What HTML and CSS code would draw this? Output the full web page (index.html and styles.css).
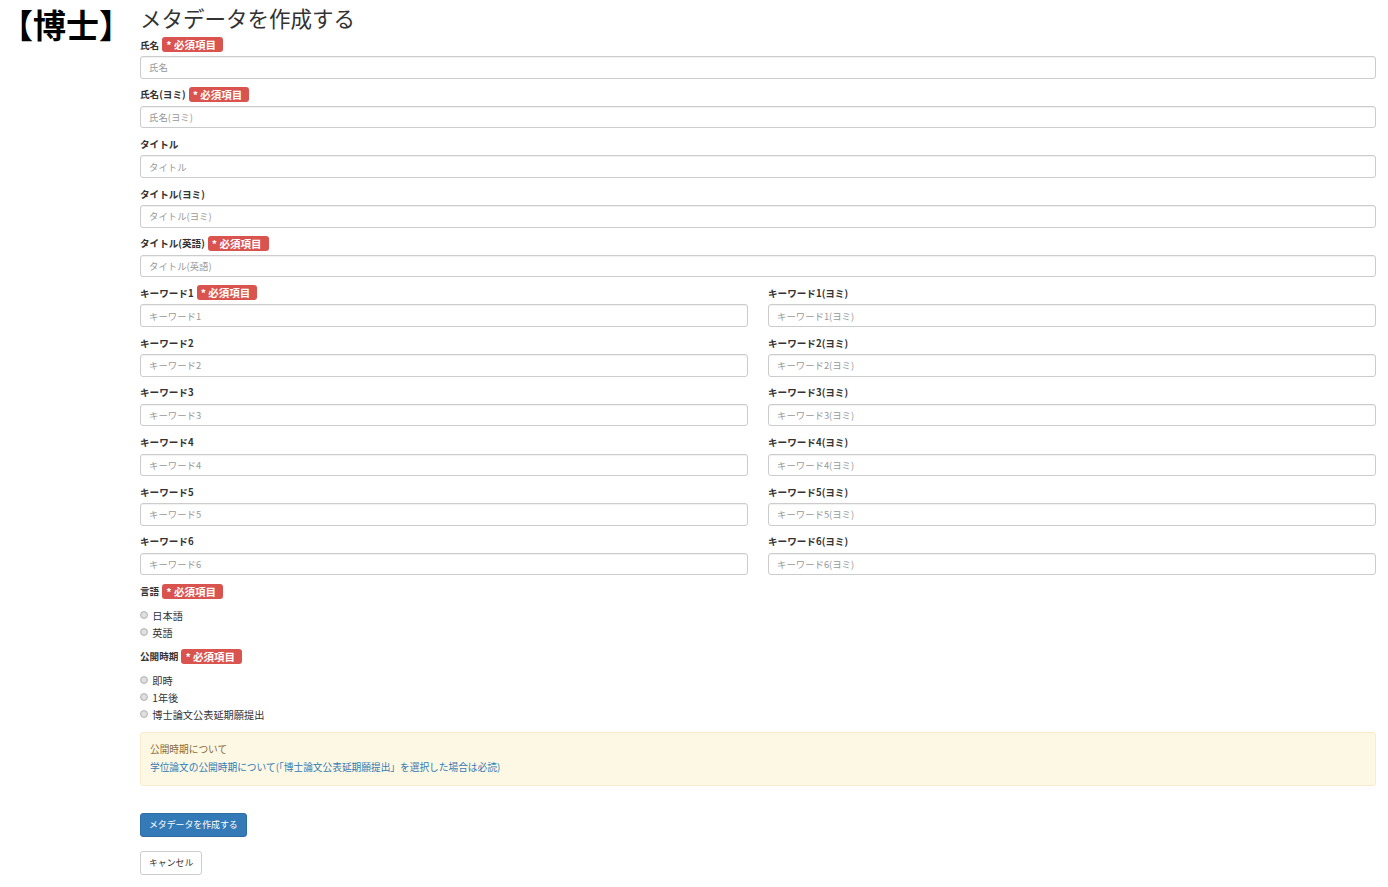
FILE: index.html
```html
<!DOCTYPE html>
<html lang="ja">
<head>
<meta charset="utf-8">
<title>メタデータを作成する</title>
<link rel="stylesheet" href="styles.css">
</head>
<body>
<div class="page">
  <aside class="side">
    <div class="degree">【博士】</div>
  </aside>
  <main class="main">
    <h1 class="title">メタデータを作成する</h1>
    <form class="form">
      <div class="group">
        <label class="lbl">氏名 <span class="req">* 必須項目</span></label>
        <input class="ctl" type="text" placeholder="氏名">
      </div>
      <div class="group">
        <label class="lbl">氏名(ヨミ) <span class="req">* 必須項目</span></label>
        <input class="ctl" type="text" placeholder="氏名(ヨミ)">
      </div>
      <div class="group">
        <label class="lbl">タイトル</label>
        <input class="ctl" type="text" placeholder="タイトル">
      </div>
      <div class="group">
        <label class="lbl">タイトル(ヨミ)</label>
        <input class="ctl" type="text" placeholder="タイトル(ヨミ)">
      </div>
      <div class="group">
        <label class="lbl">タイトル(英語) <span class="req">* 必須項目</span></label>
        <input class="ctl" type="text" placeholder="タイトル(英語)">
      </div>

      <div class="pair">
        <div class="group">
          <label class="lbl">キーワード1 <span class="req">* 必須項目</span></label>
          <input class="ctl" type="text" placeholder="キーワード1">
        </div>
        <div class="group">
          <label class="lbl">キーワード1(ヨミ)</label>
          <input class="ctl" type="text" placeholder="キーワード1(ヨミ)">
        </div>
      </div>
      <div class="pair">
        <div class="group">
          <label class="lbl">キーワード2</label>
          <input class="ctl" type="text" placeholder="キーワード2">
        </div>
        <div class="group">
          <label class="lbl">キーワード2(ヨミ)</label>
          <input class="ctl" type="text" placeholder="キーワード2(ヨミ)">
        </div>
      </div>
      <div class="pair">
        <div class="group">
          <label class="lbl">キーワード3</label>
          <input class="ctl" type="text" placeholder="キーワード3">
        </div>
        <div class="group">
          <label class="lbl">キーワード3(ヨミ)</label>
          <input class="ctl" type="text" placeholder="キーワード3(ヨミ)">
        </div>
      </div>
      <div class="pair">
        <div class="group">
          <label class="lbl">キーワード4</label>
          <input class="ctl" type="text" placeholder="キーワード4">
        </div>
        <div class="group">
          <label class="lbl">キーワード4(ヨミ)</label>
          <input class="ctl" type="text" placeholder="キーワード4(ヨミ)">
        </div>
      </div>
      <div class="pair">
        <div class="group">
          <label class="lbl">キーワード5</label>
          <input class="ctl" type="text" placeholder="キーワード5">
        </div>
        <div class="group">
          <label class="lbl">キーワード5(ヨミ)</label>
          <input class="ctl" type="text" placeholder="キーワード5(ヨミ)">
        </div>
      </div>
      <div class="pair">
        <div class="group">
          <label class="lbl">キーワード6</label>
          <input class="ctl" type="text" placeholder="キーワード6">
        </div>
        <div class="group">
          <label class="lbl">キーワード6(ヨミ)</label>
          <input class="ctl" type="text" placeholder="キーワード6(ヨミ)">
        </div>
      </div>

      <div class="rgroup">
        <label class="lbl">言語 <span class="req">* 必須項目</span></label>
        <div class="radios">
          <label class="radio"><input type="radio" name="lang"> 日本語</label>
          <label class="radio"><input type="radio" name="lang"> 英語</label>
        </div>
      </div>
      <div class="rgroup">
        <label class="lbl">公開時期 <span class="req">* 必須項目</span></label>
        <div class="radios">
          <label class="radio"><input type="radio" name="pub"> 即時</label>
          <label class="radio"><input type="radio" name="pub"> 1年後</label>
          <label class="radio"><input type="radio" name="pub"> 博士論文公表延期願提出</label>
        </div>
      </div>

      <div class="alert">
        <div class="alert-title">公開時期について</div>
        <a class="alert-link" href="#">学位論文の公開時期について(「博士論文公表延期願提出」を選択した場合は必読)</a>
      </div>

      <div class="actions">
        <button type="button" class="btn btn-primary">メタデータを作成する</button>
        <button type="button" class="btn btn-default">キャンセル</button>
      </div>
    </form>
  </main>
</div>
</body>
</html>
```

FILE: styles.css
```css
* { box-sizing: border-box; }

html, body {
  margin: 0;
  padding: 0;
  background: #fff;
}

body {
  font-family: "Noto Sans CJK JP", "Noto Sans", sans-serif;
  color: #333;
  font-size: 9.4px;
  overflow: hidden;
}

.page {
  display: flex;
  align-items: flex-start;
}

.side {
  width: 140px;
  flex: 0 0 140px;
}

.degree {
  font-size: 33px;
  font-weight: 700;
  line-height: 48px;
  color: #000;
  margin: 0;
  white-space: nowrap;
}

.main {
  flex: 1;
  padding-right: 12px;
}

.title {
  margin: 4px 0 5px;
  font-size: 21.5px;
  line-height: 28px;
  font-weight: 400;
  color: #333;
}

.form {
  display: flex;
  flex-direction: column;
}

.group {
  display: flex;
  flex-direction: column;
  margin-bottom: 8.2px;
}

.pair {
  display: grid;
  grid-template-columns: 1fr 1fr;
  column-gap: 20px;
}

.lbl {
  display: flex;
  align-items: center;
  gap: 3px;
  height: 15px;
  margin-bottom: 4px;
  font-size: 9.6px;
  font-weight: 700;
  color: #333;
  white-space: nowrap;
}

.req {
  display: inline-flex;
  align-items: center;
  height: 15px;
  padding: 0 7px 0 4px;
  background: #d9534f;
  color: #fff;
  border-radius: 3px;
  font-size: 10.5px;
  font-weight: 700;
}

.ctl {
  display: block;
  width: 100%;
  height: 22.5px;
  padding: 0 8px;
  border: 1px solid #ccc;
  border-radius: 3px;
  font-family: inherit;
  font-size: 9.4px;
  color: #555;
  background: #fff;
  box-shadow: inset 0 1px 1px rgba(0,0,0,0.06);
  outline: none;
}

.ctl::placeholder {
  color: #999;
}

.rgroup {
  display: flex;
  flex-direction: column;
  margin-bottom: 8px;
}

.rgroup .lbl {
  margin-bottom: 8px;
}

.radios {
  display: flex;
  flex-direction: column;
}

.radio {
  display: flex;
  align-items: center;
  height: 17px;
  font-size: 10.2px;
  color: #333;
  white-space: pre;
}

.radio input {
  appearance: none;
  -webkit-appearance: none;
  width: 8px;
  height: 8px;
  margin: 0 2px 0 0;
  border: 1px solid #b5b5b5;
  border-radius: 50%;
  background: radial-gradient(circle at 50% 50%, #e6e6e6 0%, #d0d0d0 100%);
}

.alert {
  margin-top: 1.5px;
  padding: 7px 9px 9px;
  background: #fcf8e3;
  border: 1px solid #faebcc;
  border-radius: 3px;
}

.alert-title {
  line-height: 18px;
  color: #8a6d3b;
  font-size: 9.7px;
}

.alert-link {
  display: block;
  line-height: 18px;
  color: #337ab7;
  font-size: 9.7px;
  text-decoration: none;
}

.actions {
  display: flex;
  flex-direction: column;
  align-items: flex-start;
  gap: 14px;
  margin-top: 27px;
}

.btn {
  height: 24px;
  padding: 0 8px;
  border-radius: 3px;
  font-family: inherit;
  font-size: 8.9px;
  line-height: 22px;
  cursor: pointer;
}

.btn-primary {
  background: #337ab7;
  border: 1px solid #2e6da4;
  color: #fff;
}

.btn-default {
  background: #fff;
  border: 1px solid #ccc;
  color: #333;
}
```
